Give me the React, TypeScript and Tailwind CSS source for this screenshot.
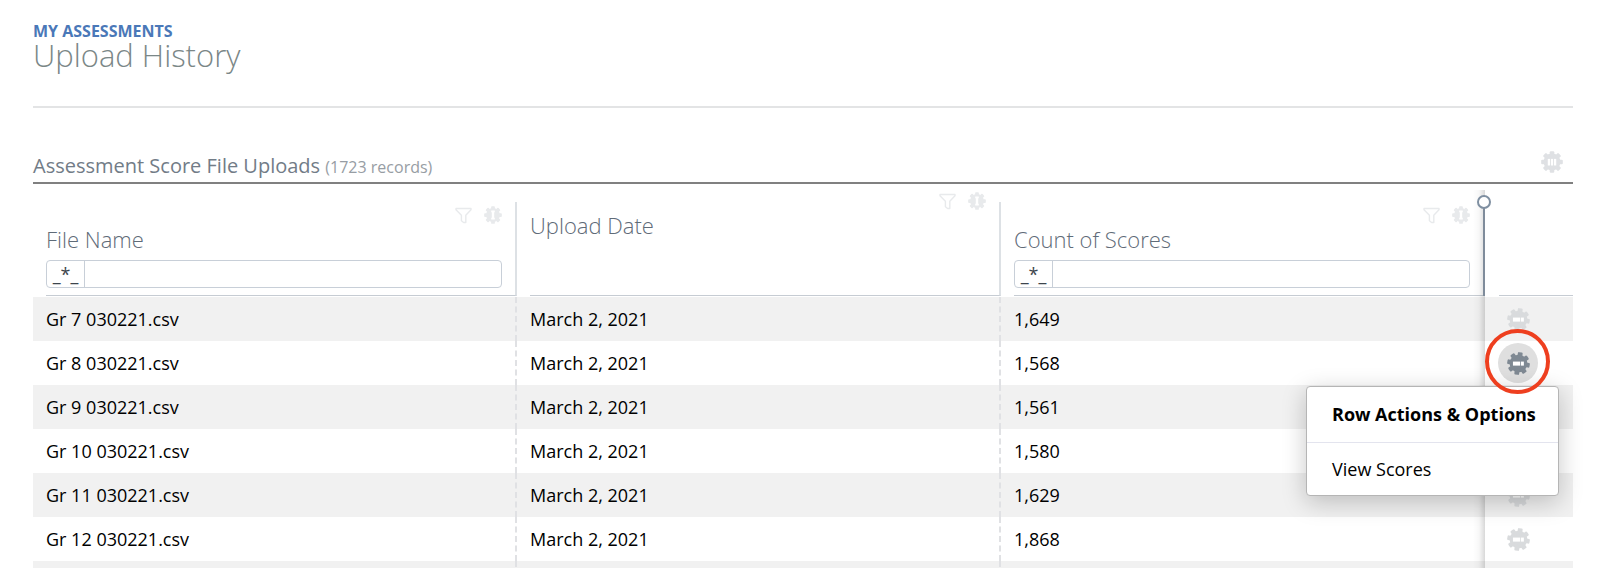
import { useState, type ReactNode } from "react";

type Column = {
  key: "file" | "date" | "count";
  label: string;
  filterable: boolean;
};

type Upload = {
  file: string;
  date: string;
  count: string;
};

const columns: Column[] = [
  { key: "file", label: "File Name", filterable: true },
  { key: "date", label: "Upload Date", filterable: false },
  { key: "count", label: "Count of Scores", filterable: true },
];

const uploads: Upload[] = [
  { file: "Gr 7 030221.csv", date: "March 2, 2021", count: "1,649" },
  { file: "Gr 8 030221.csv", date: "March 2, 2021", count: "1,568" },
  { file: "Gr 9 030221.csv", date: "March 2, 2021", count: "1,561" },
  { file: "Gr 10 030221.csv", date: "March 2, 2021", count: "1,580" },
  { file: "Gr 11 030221.csv", date: "March 2, 2021", count: "1,629" },
  { file: "Gr 12 030221.csv", date: "March 2, 2021", count: "1,868" },
  { file: "", date: "", count: "" },
];

const teeth = [0, 45, 90, 135, 180, 225, 270, 315];

function Gear({ className, tilt = 0, children }: { className: string; tilt?: number; children?: ReactNode }) {
  return (
    <svg viewBox="0 0 24 24" className={className} fill="currentColor" aria-hidden="true">
      <g transform={`rotate(${tilt} 12 12)`}>
        <circle cx="12" cy="12" r="9.2" />
        {teeth.map((angle) => (
          <rect key={angle} x="9.5" y="0.2" width="5" height="6" rx="1.2" transform={`rotate(${angle} 12 12)`} />
        ))}
      </g>
      {children}
    </svg>
  );
}

function TableGear({ className }: { className: string }) {
  return (
    <Gear className={className}>
      <g fill="#fff">
        <rect x="7.4" y="8.6" width="2.4" height="7.2" />
        <rect x="10.8" y="8.6" width="2.4" height="7.2" />
        <rect x="14.2" y="8.6" width="2.4" height="7.2" />
      </g>
    </Gear>
  );
}

function ColumnGear({ className }: { className: string }) {
  return (
    <Gear className={className}>
      <path d="M9.6 6h4.8v2.4h-.8v7.2h.8V18H9.6v-2.4h.8V8.4h-.8z" fill="#fff" />
    </Gear>
  );
}

function RowGear({ className }: { className: string }) {
  return (
    <Gear className={className} tilt={10}>
      <g fill="#fff">
        <rect x="6.2" y="10" width="7.4" height="4.2" />
        <rect x="14.4" y="10" width="3.2" height="4.2" />
      </g>
    </Gear>
  );
}

function Funnel() {
  return (
    <svg viewBox="0 0 17 17" className="size-[17px]" fill="none" stroke="currentColor" strokeWidth="1.4" strokeLinejoin="round" aria-hidden="true">
      <path d="M1 1.5h15v1.2L10.8 8.2v7.3H8.6L6.4 13.8V8.2L1 2.7z" />
    </svg>
  );
}

function HeaderCell({ column }: { column: Column }) {
  return (
    <th scope="col" className="h-[113px] p-0 pl-[13px] text-left align-bottom font-light">
      <div className="mb-px flex h-[94px] flex-col border-r-2 border-b border-r-[#dde1e5] border-b-[#c6ccd3] pr-[13px]">
        <div className={`flex justify-end gap-3 text-[#e8eaec] ${column.filterable ? "mt-1" : "-mt-2.5"}`}>
          <button type="button" aria-label={`Filter ${column.label}`}>
            <Funnel />
          </button>
          <button type="button" aria-label={`${column.label} options`}>
            <ColumnGear className="size-[18px]" />
          </button>
        </div>
        <span className="text-[22px] leading-[30px] text-[#5f6b78]">{column.label}</span>
        {column.filterable && (
          <div className="mt-1.5 flex h-7 overflow-hidden rounded border border-[#c8cfd8]">
            <button
              type="button"
              aria-label={`${column.label} match type`}
              className="w-[38px] border-r border-[#c8cfd8] text-lg leading-6 font-normal text-[#3d454d]"
            >
              _*_
            </button>
            <input type="text" aria-label={`Search ${column.label}`} className="min-w-0 flex-1 px-2 text-base outline-none" />
          </div>
        )}
      </div>
    </th>
  );
}

function RowMenu() {
  return (
    <div
      role="menu"
      className="absolute top-[45px] right-[14px] z-20 w-[253px] rounded border border-[#b5b5b5] bg-white shadow-[0_6px_24px_rgba(0,0,0,0.22)]"
    >
      <div className="border-b border-[#e3e4ee] px-[25px] pt-[15px] pb-4 text-lg leading-6 font-bold whitespace-nowrap">Row Actions &amp; Options</div>
      <button type="button" role="menuitem" className="block w-full px-[25px] py-[14px] text-left text-lg leading-6">
        View Scores
      </button>
    </div>
  );
}

export default function App() {
  const [openRow, setOpenRow] = useState<number | null>(1);

  return (
    <main className="h-screen overflow-hidden bg-white pr-[27px] pl-[33px] font-['Open_Sans','Noto_Sans',sans-serif] text-black">
      <header className="border-b-2 border-[#e3e4e5] pt-[21px] pb-[37px]">
        <a href="#assessments" className="block text-base leading-5 font-bold text-[#4a78b8] uppercase">
          My Assessments
        </a>
        <h1 className="text-[31px] leading-7 font-light text-[#7b8787]">Upload History</h1>
      </header>

      <section>
        <div className="mt-[43px] flex items-start justify-between border-b-2 border-[#808080] pr-2.5 pb-px">
          <h2 className="text-xl leading-[30px] text-[#727c87]">
            Assessment Score File Uploads <span className="text-base text-[#979da4]">(1723 records)</span>
          </h2>
          <button type="button" aria-label="Table options" className="text-[#dfe1e4]">
            <TableGear className="size-[22px]" />
          </button>
        </div>

        <div className="relative">
          <table className="w-full table-fixed border-separate border-spacing-0">
            <colgroup>
              <col />
              <col />
              <col />
              <col className="w-[88px]" />
            </colgroup>
            <thead>
              <tr>
                {columns.map((column) => (
                  <HeaderCell key={column.key} column={column} />
                ))}
                <th scope="col" aria-label="Row actions" className="p-0 pl-[14px] align-bottom">
                  <div className="mb-px border-b border-[#c6ccd3]" />
                </th>
              </tr>
            </thead>
            <tbody>
              {uploads.map((upload, i) => (
                <tr key={i} className="odd:bg-[#f1f1f1]">
                  {columns.map((column) => (
                    <td
                      key={column.key}
                      className="h-11 border-r-2 border-dashed border-[#e0e1e4] p-0 pl-[13px] text-lg leading-6 nth-[3]:border-transparent"
                    >
                      {upload[column.key]}
                    </td>
                  ))}
                  <td className="relative p-0">
                    <button
                      type="button"
                      aria-label="Row actions and options"
                      aria-expanded={openRow === i}
                      onClick={() => setOpenRow(openRow === i ? null : i)}
                      className={`ml-[13px] flex size-10 items-center justify-center rounded-full ${
                        openRow === i ? "bg-[#dfdfdf] text-[#7f8993]" : "text-[#d9dbdd]"
                      }`}
                    >
                      <RowGear className="size-[23px]" />
                    </button>
                    {openRow === i && (
                      <>
                        <RowMenu />
                        <span className="pointer-events-none absolute -top-3 left-0 z-30 size-[65px] rounded-full border-4 border-[#ee3f1f]" />
                      </>
                    )}
                  </td>
                </tr>
              ))}
            </tbody>
          </table>

          {/* edge of the pinned action column */}
          <div className="pointer-events-none absolute top-1.5 right-[88px] bottom-0 w-3 bg-linear-to-l from-black/15 via-black/3 to-transparent" />
          <div className="pointer-events-none absolute top-[18px] right-[88px] h-[94px] w-0.5 bg-[#7f8c9b]" />
          <div className="pointer-events-none absolute top-[11px] right-[82px] size-[14px] rounded-full border-2 border-[#7f8fa1] bg-white" />
        </div>
      </section>
    </main>
  );
}
